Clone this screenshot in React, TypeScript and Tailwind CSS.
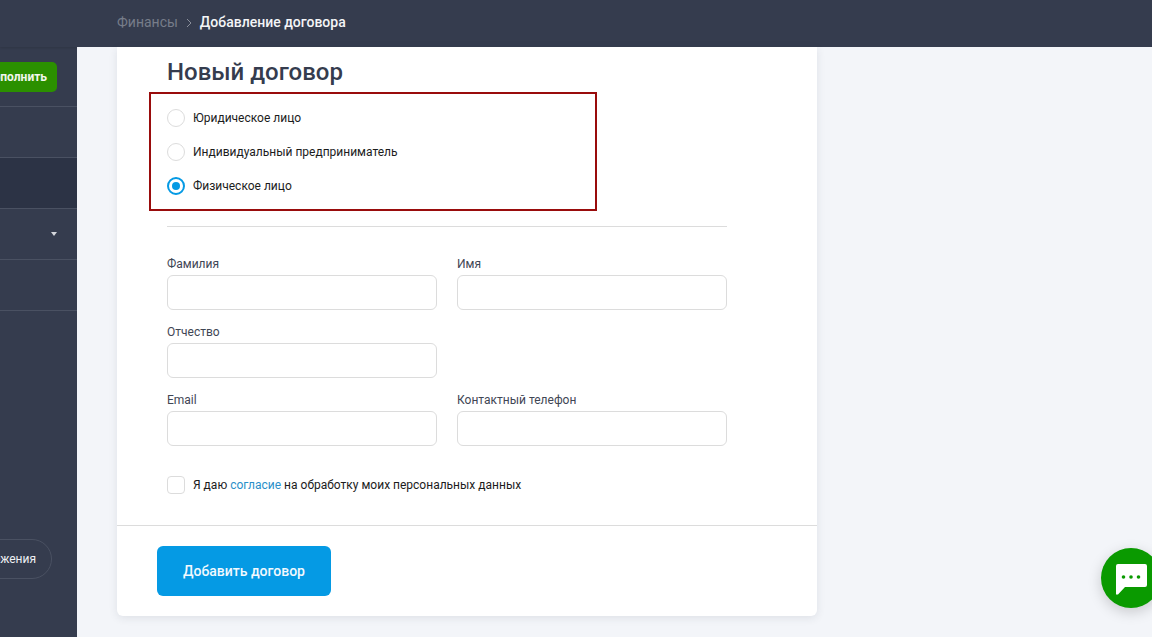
import React from "react";

function Field({ label, className = "" }: { label: string; className?: string }) {
  return (
    <div className={"w-[270px] " + className}>
      <div className="h-[23px] text-[12px] leading-[25px] text-[#3f4654]">{label}</div>
      <div className="h-[35px] rounded-[6px] border border-[#dcdcdc] bg-white" />
    </div>
  );
}

function Radio({ label, checked = false }: { label: string; checked?: boolean }) {
  return (
    <div className="flex h-[34px] items-center">
      {checked ? (
        <span className="flex h-[18px] w-[18px] items-center justify-center rounded-full border-2 border-[#059ae4] bg-white">
          <span className="h-[8px] w-[8px] rounded-full bg-[#059ae4]" />
        </span>
      ) : (
        <span className="h-[18px] w-[18px] rounded-full border border-[#dcdcdc] bg-white" />
      )}
      <span className="ml-2 text-[12px] text-[#1c1c1c]">{label}</span>
    </div>
  );
}

function SideRow({ active = false, children }: { active?: boolean; children?: React.ReactNode }) {
  return (
    <div className={"flex h-[51px] items-center justify-end border-b border-[#4a5162] pr-5 " + (active ? "bg-[#2c3345]" : "")}>
      {children}
    </div>
  );
}

export default function App() {
  return (
    <div className="flex h-[637px] w-[1152px] overflow-hidden bg-[#f3f5f9] font-['Roboto',sans-serif]">
      <aside className="flex w-[77px] shrink-0 flex-col bg-[#353c4e]">
        <div className="h-[47px] shadow-[0_1px_2px_rgba(0,0,0,0.12)]" />
        <div className="flex h-[60px] items-center justify-end overflow-hidden border-b border-[#4a5162] pt-[1px] pr-5">
          <div className="flex h-[30px] shrink-0 items-center rounded-[5px] bg-[#2b9000] pr-[10px] pl-3 text-[12px] font-bold whitespace-nowrap text-[#f2f7ef]">
            Пополнить
          </div>
        </div>
        <SideRow />
        <SideRow active />
        <SideRow>
          <span className="h-0 w-0 border-x-[3px] border-t-[4px] border-x-transparent border-t-[#d5d7dc]" />
        </SideRow>
        <SideRow />
        <div className="flex flex-1 flex-col items-end justify-end overflow-hidden pr-[25px] pb-[58px]">
          <div className="flex h-[40px] shrink-0 items-center rounded-full border border-[#4a5162] pr-[15px] pl-3 text-[12px] whitespace-nowrap text-[#eef0f3]">
            Предложения
          </div>
        </div>
      </aside>

      <div className="flex min-w-0 flex-1 flex-col">
        <header className="flex h-[47px] shrink-0 items-center bg-[#353c4e] pb-[2px] pl-10 text-[14px]">
          <span className="text-[#777d8a]">Финансы</span>
          <svg className="mx-[8px]" width="6" height="10" viewBox="0 0 6 10" fill="none" stroke="#8a8f9b" strokeWidth="1">
            <path d="M1 1l4 4-4 4" />
          </svg>
          <span className="font-medium text-[#f4f5f7]">Добавление договора</span>
        </header>

        <main className="relative flex-1 pl-10">
          <div className="h-[569px] w-[700px] rounded-b-[6px] bg-white shadow-[0_2px_8px_rgba(40,50,70,0.1)]">
            <div className="h-[478px] pl-[50px]">
              <h1 className="h-[45px] pt-[9px] text-[24px] leading-[32px] font-medium text-[#353c4e]">Новый договор</h1>
              <div className="-ml-[18px] h-[119px] w-[448px] border-2 border-[#990c0c] pt-[7px] pl-[16px]">
                <Radio label="Юридическое лицо" />
                <Radio label="Индивидуальный предприниматель" />
                <Radio label="Физическое лицо" checked />
              </div>
              <div className="mt-[15px] h-px w-[560px] bg-[#dcdcdc]" />
              <div className="mt-[25px] grid w-[560px] grid-cols-[270px_270px] gap-x-5 gap-y-[10px]">
                <Field label="Фамилия" />
                <Field label="Имя" />
                <Field label="Отчество" />
                <div />
                <Field label="Email" />
                <Field label="Контактный телефон" />
              </div>
              <div className="mt-[30px] flex items-center">
                <span className="h-[18px] w-[18px] rounded-[4px] border border-[#dcdcdc] bg-white" />
                <span className="ml-2 text-[12px] text-[#1c1c1c]">
                  Я даю <span className="text-[#2b8fc9]">согласие</span> на обработку моих персональных данных
                </span>
              </div>
            </div>
            <div className="border-t border-[#dcdcdc] pt-5 pl-10">
              <div className="flex h-[50px] w-[174px] items-center justify-center rounded-[6px] bg-[#059ae4] text-[14px] font-medium text-[#f2f9fe]">
                Добавить договор
              </div>
            </div>
          </div>

          <div className="absolute top-[501px] left-[1024px] flex h-[60px] w-[60px] items-center justify-center rounded-full bg-[#0a9a00] shadow-[0_4px_14px_rgba(0,0,0,0.18)]">
            <svg width="32" height="34" viewBox="0 0 32 34">
              <path d="M3 3h27a2 2 0 0 1 2 2v19a2 2 0 0 1-2 2H10l-7 7.500H1V5a2 2 0 0 1 2-2z" fill="#fff" />
              <circle cx="8.500" cy="16" r="1.800" fill="#0a9a00" />
              <circle cx="16" cy="16" r="1.800" fill="#0a9a00" />
              <circle cx="23.500" cy="16" r="1.800" fill="#0a9a00" />
            </svg>
          </div>
        </main>
      </div>
    </div>
  );
}
